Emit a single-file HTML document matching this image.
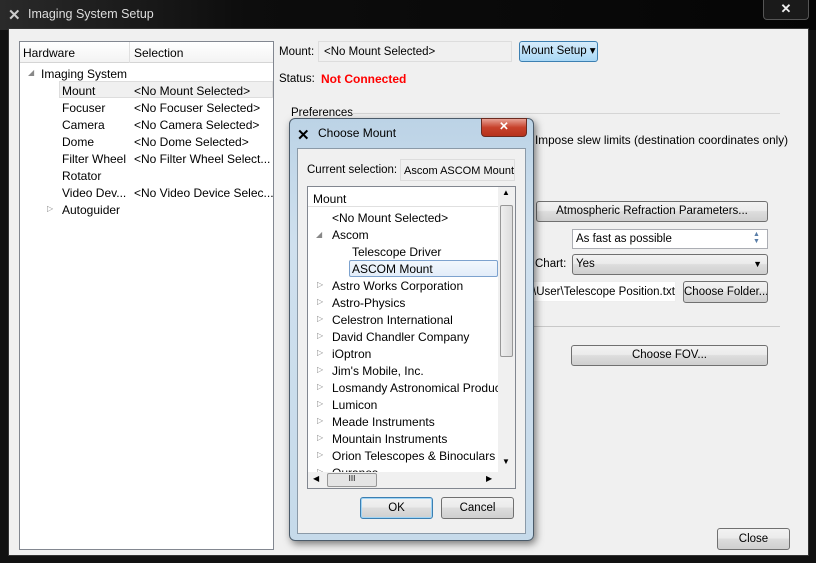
<!DOCTYPE html>
<html><head><style>
*{box-sizing:border-box;margin:0;padding:0}
body{width:816px;height:563px;overflow:hidden;background:#111;font-family:"Liberation Sans",sans-serif;font-size:11.5px;color:#000;position:relative}
.a{position:absolute;white-space:nowrap}
.btn{position:absolute;white-space:nowrap;border:1px solid #707070;border-radius:3px;background:linear-gradient(#f2f2f2,#ebebeb 45%,#dddddd 50%,#cfcfcf);text-align:center;font-size:11.5px;overflow:hidden}
.fld{position:absolute;background:#fff;border:1px solid #abadb3}
.tri{position:absolute;font-size:8px;color:#888}
.lp{font-size:12px}
</style></head><body>
<div class="a" style="left:0;top:0;width:816px;height:30px;background:linear-gradient(90deg,#2a2a2a,#0d0d0d 30%,#050505)"></div>
<div class="a" style="left:8px;top:6px;font-size:15px;font-weight:bold;color:#ccc">✕</div>
<div class="a" style="left:28px;top:7px;font-size:12.5px;color:#ddd">Imaging System Setup</div>
<div class="a" style="left:763px;top:0;width:46px;height:20px;border:1px solid #555;border-top:0;border-radius:0 0 4px 4px;background:#1a1a1a;color:#eee;text-align:center;font-weight:bold;font-size:13px;line-height:18px">✕</div>
<div class="a" style="left:8px;top:28px;width:801px;height:528px;background:#f0f0f0;border:1px solid #333"></div>
<!-- left panel -->
<div class="a" style="left:19px;top:41px;width:255px;height:509px;background:#fff;border:1px solid #828790"></div>
<div class="a" style="left:20px;top:42px;width:253px;height:21px;background:linear-gradient(#fff,#f3f3f3);border-bottom:1px solid #d5d5d5"></div>
<div class="a" style="left:129px;top:42px;width:1px;height:21px;background:#e0e0e0"></div>
<div class="lp">
<div class="a" style="left:23px;top:46px">Hardware</div>
<div class="a" style="left:134px;top:46px">Selection</div>
<div class="a" style="left:59px;top:81px;width:214px;height:17px;background:#f0f0f0;border:1px solid #ddd"></div>
<div class="tri" style="left:28px;top:68px">◢</div>
<div class="a" style="left:41px;top:67px">Imaging System</div>
<div class="a" style="left:62px;top:84px">Mount</div><div class="a" style="left:134px;top:84px">&lt;No Mount Selected&gt;</div>
<div class="a" style="left:62px;top:101px">Focuser</div><div class="a" style="left:134px;top:101px">&lt;No Focuser Selected&gt;</div>
<div class="a" style="left:62px;top:118px">Camera</div><div class="a" style="left:134px;top:118px">&lt;No Camera Selected&gt;</div>
<div class="a" style="left:62px;top:135px">Dome</div><div class="a" style="left:134px;top:135px">&lt;No Dome Selected&gt;</div>
<div class="a" style="left:62px;top:152px">Filter Wheel</div><div class="a" style="left:134px;top:152px">&lt;No Filter Wheel Select...</div>
<div class="a" style="left:62px;top:169px">Rotator</div>
<div class="a" style="left:62px;top:186px">Video Dev...</div><div class="a" style="left:134px;top:186px">&lt;No Video Device Selec...</div>
<div class="tri" style="left:47px;top:204px">▷</div>
<div class="a" style="left:62px;top:203px">Autoguider</div>
</div>
<!-- right -->
<div class="a" style="left:279px;top:46px">Mount:</div>
<div class="fld" style="left:318px;top:41px;width:194px;height:21px;background:#f0f0f0;border-color:#ddd"></div>
<div class="a" style="left:324px;top:46px">&lt;No Mount Selected&gt;</div>
<div class="btn" style="left:519px;top:41px;width:79px;height:21px;background:linear-gradient(#d6ecfb,#a9d8f6);border-color:#3c7fb1;line-height:19px">Mount Setup ▾</div>
<div class="a" style="left:279px;top:73px">Status:</div>
<div class="a" style="left:321px;top:72px;color:#f00;font-weight:bold;font-size:12px">Not Connected</div>
<div class="a" style="left:291px;top:107px">Preferences</div>
<div class="a" style="left:352px;top:113px;width:428px;height:1px;background:#d5d5d5"></div>
<div class="a" style="left:535px;top:133px;font-size:11.8px">Impose slew limits (destination coordinates only)</div>
<div class="btn" style="left:536px;top:201px;width:232px;height:21px;line-height:19px">Atmospheric Refraction Parameters...</div>
<div class="fld" style="left:572px;top:229px;width:196px;height:20px"></div>
<div class="a" style="left:576px;top:233px">As fast as possible</div>
<div class="a" style="left:753px;top:231px;font-size:7px;color:#5a7ea8;line-height:7px">▲<br>▼</div>
<div class="a" style="left:535px;top:258px">Chart:</div>
<div class="btn" style="left:572px;top:254px;width:196px;height:21px;text-align:left;padding-left:3px;line-height:19px">Yes<span style="position:absolute;right:5px;font-size:9px">▼</span></div>
<div class="fld" style="left:533px;top:281px;width:143px;height:21px;border-color:#eee"></div>
<div class="a" style="left:533px;top:286px">\User\Telescope Position.txt</div>
<div class="btn" style="left:683px;top:281px;width:85px;height:22px;line-height:20px">Choose Folder...</div>
<div class="a" style="left:534px;top:326px;width:246px;height:1px;background:#c8c8c8"></div>
<div class="btn" style="left:571px;top:345px;width:197px;height:21px;line-height:19px">Choose FOV...</div>
<div class="btn" style="left:717px;top:528px;width:73px;height:22px;line-height:20px">Close</div>
<!-- dialog -->
<div class="a" style="left:289px;top:118px;width:245px;height:423px;border-radius:6px;background:linear-gradient(#bcd3e6,#cfe0ee 30%,#c6daea);border:1px solid #4b5b6a;box-shadow:2px 3px 8px rgba(0,0,0,.5)"></div>
<div class="a" style="left:297px;top:126px;font-size:15px;font-weight:bold">✕</div>
<div class="a" style="left:318px;top:126px;font-size:12px">Choose Mount</div>
<div class="a" style="left:481px;top:118px;width:46px;height:19px;border-radius:0 0 4px 4px;background:linear-gradient(#e8a195,#c7412b 50%,#b6321c);border:1px solid #6b2a20;color:#fff;text-align:center;font-weight:bold;line-height:17px">✕</div>
<div class="a" style="left:297px;top:148px;width:229px;height:386px;background:#f0f0f0;border:1px solid #8b9aa8"></div>
<div class="a" style="left:307px;top:164px">Current selection:</div>
<div class="fld" style="left:400px;top:159px;width:115px;height:22px;background:#f0f0f0;border-color:#ddd"></div>
<div class="a" style="left:404px;top:165px;font-size:11px">Ascom ASCOM Mount</div>
<div class="a" style="left:307px;top:186px;width:209px;height:303px;background:#fff;border:1px solid #828790"></div>
<div class="a" style="left:308px;top:187px;width:190px;height:20px;border-bottom:1px solid #e0e0e0"></div>
<div class="a" style="left:313px;top:192px;font-size:12px">Mount</div>
<div class="a" style="left:498px;top:187px;width:17px;height:285px;background:#f0f0f0"></div>
<div class="a" style="left:500px;top:205px;width:13px;height:152px;border:1px solid #979797;border-radius:2px;background:linear-gradient(90deg,#eee,#dcdcdc)"></div>
<div class="a" style="left:502px;top:188px;font-size:8px">▲</div>
<div class="a" style="left:502px;top:457px;font-size:8px">▼</div>
<div class="a" style="left:308px;top:472px;width:207px;height:16px;background:#f0f0f0"></div>
<div class="a" style="left:327px;top:473px;width:50px;height:14px;border:1px solid #979797;border-radius:2px;background:#e4e4e4;font-size:8px;text-align:center">III</div>
<div class="a" style="left:313px;top:474px;font-size:8px">◀</div>
<div class="a" style="left:486px;top:474px;font-size:8px">▶</div>
<div class="a" style="left:349px;top:260px;width:149px;height:17px;border:1px solid #7da2ce;border-radius:2px;background:linear-gradient(#f2f7fd,#e3edf9)"></div>
<div style="position:absolute;left:308px;top:208px;width:190px;height:264px;overflow:hidden;font-size:12px">
<div class="a" style="left:24px;top:3px">&lt;No Mount Selected&gt;</div>
<div class="tri" style="left:8px;top:22px">◢</div><div class="a" style="left:24px;top:20px">Ascom</div>
<div class="a" style="left:44px;top:37px">Telescope Driver</div>
<div class="a" style="left:44px;top:54px">ASCOM Mount</div>
<div class="tri" style="left:9px;top:72px">▷</div><div class="a" style="left:24px;top:71px">Astro Works Corporation</div>
<div class="tri" style="left:9px;top:89px">▷</div><div class="a" style="left:24px;top:88px">Astro-Physics</div>
<div class="tri" style="left:9px;top:106px">▷</div><div class="a" style="left:24px;top:105px">Celestron International</div>
<div class="tri" style="left:9px;top:123px">▷</div><div class="a" style="left:24px;top:122px">David Chandler Company</div>
<div class="tri" style="left:9px;top:140px">▷</div><div class="a" style="left:24px;top:139px">iOptron</div>
<div class="tri" style="left:9px;top:157px">▷</div><div class="a" style="left:24px;top:156px">Jim's Mobile, Inc.</div>
<div class="tri" style="left:9px;top:174px">▷</div><div class="a" style="left:24px;top:173px">Losmandy Astronomical Products</div>
<div class="tri" style="left:9px;top:191px">▷</div><div class="a" style="left:24px;top:190px">Lumicon</div>
<div class="tri" style="left:9px;top:208px">▷</div><div class="a" style="left:24px;top:207px">Meade Instruments</div>
<div class="tri" style="left:9px;top:225px">▷</div><div class="a" style="left:24px;top:224px">Mountain Instruments</div>
<div class="tri" style="left:9px;top:242px">▷</div><div class="a" style="left:24px;top:241px">Orion Telescopes &amp; Binoculars</div>
<div class="tri" style="left:9px;top:259px">▷</div><div class="a" style="left:24px;top:258px">Ouranos</div>
</div>
<div class="btn" style="left:360px;top:497px;width:73px;height:22px;line-height:20px;border-color:#3c7fb1;box-shadow:inset 0 0 0 1px #9fd4f5">OK</div>
<div class="btn" style="left:441px;top:497px;width:73px;height:22px;line-height:20px">Cancel</div>
</body></html>
